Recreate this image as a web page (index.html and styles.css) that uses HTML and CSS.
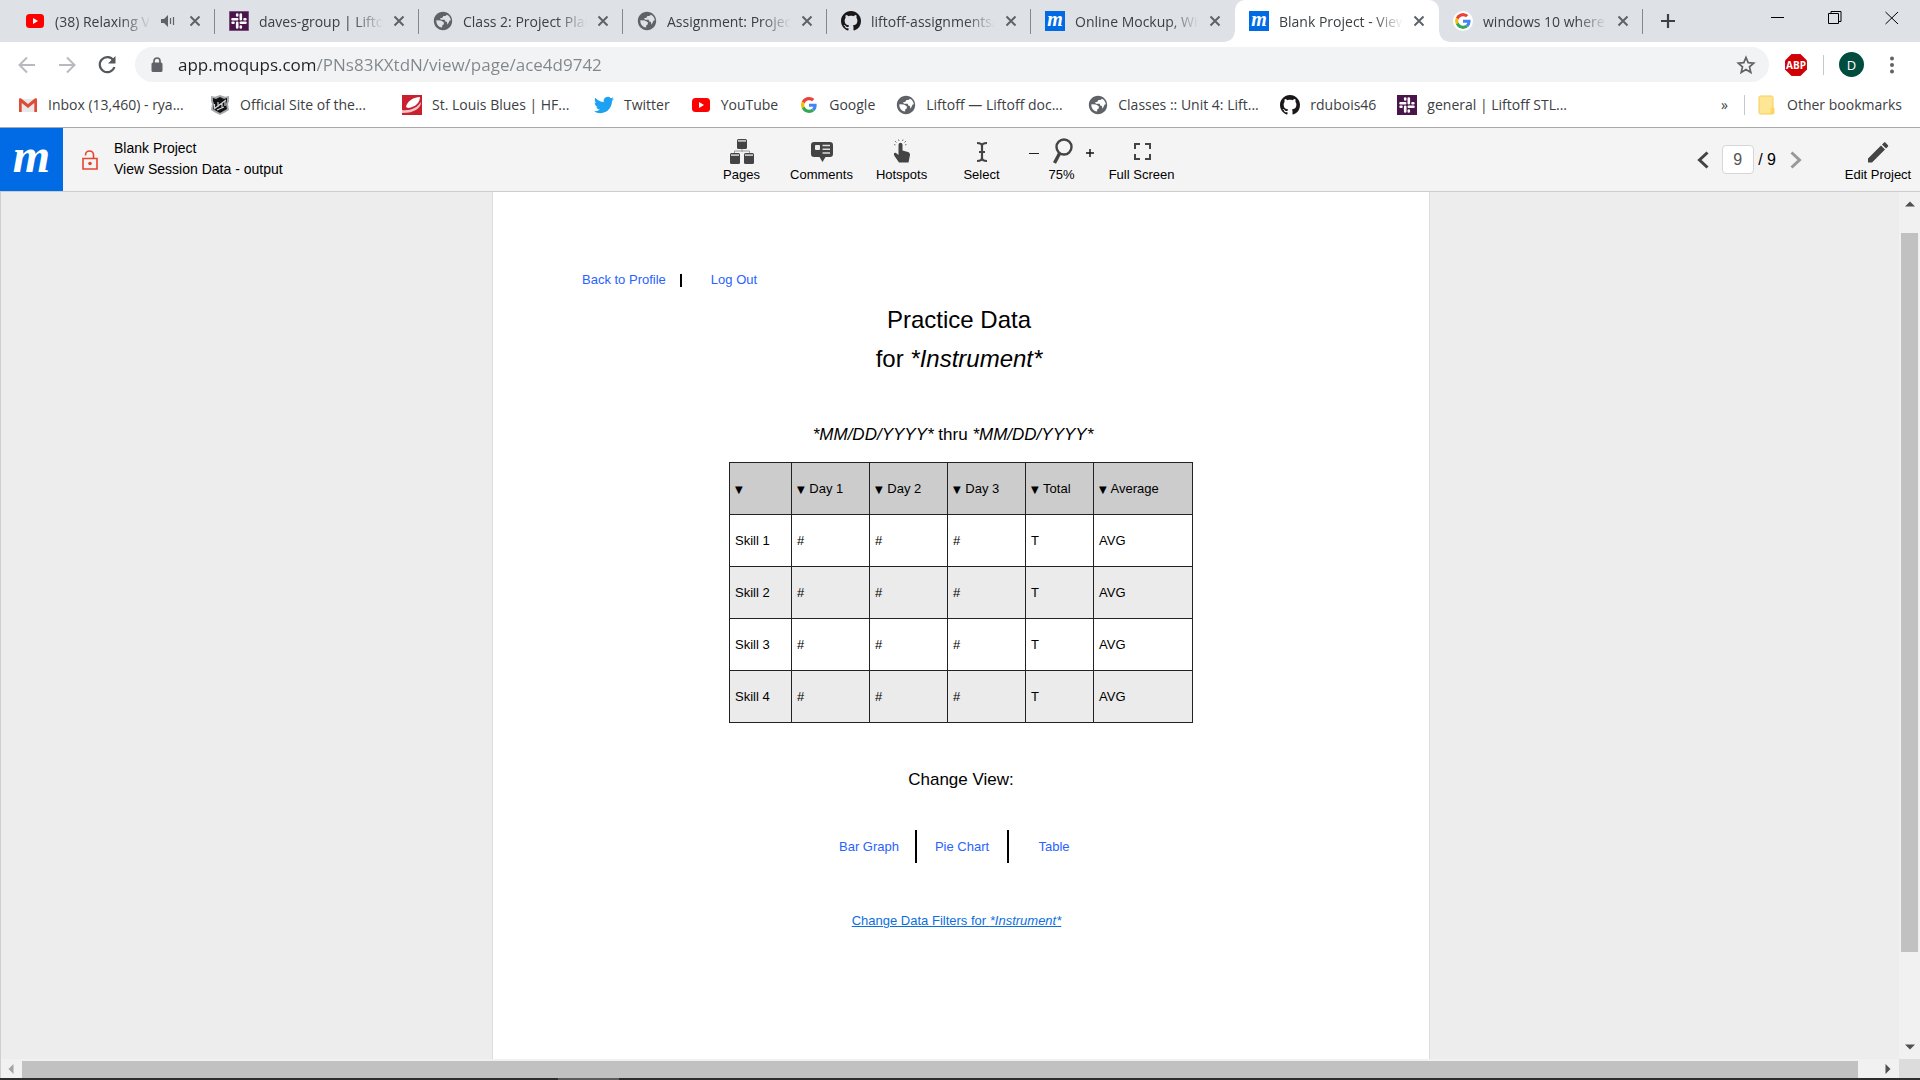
FILE: index.html
```
<!DOCTYPE html>
<html lang="en">
<head>
<meta charset="utf-8">
<meta name="viewport" content="width=device-width, initial-scale=1">
<title>Blank Project - View Session Data</title>
<link rel="stylesheet" href="styles.css">
</head>
<body>
<svg class="sprite" aria-hidden="true">
  <symbol id="youtube" viewBox="0 0 20 20"><rect x="1" y="3" width="18" height="14" rx="3.5" fill="#f00"/><path d="M8 7v6l5-3z" fill="#fff"/></symbol>
  <symbol id="slack" viewBox="0 0 20 20"><rect width="20" height="20" fill="#4a154b"/><g class="marks" stroke-width="2.6" stroke-linecap="round"><path d="M3.500 8.200h4.700M11.800 3.500v4.700M11.800 11.800h4.700M8.200 11.800v4.700M8.200 3.600v.9M16.400 8.200h-.9M11.800 16.400v-.9M3.600 11.800h.9"/></g></symbol>
  <symbol id="globe" viewBox="0 0 24 24"><path fill="#5f6368" d="M12 1C5.9 1 1 5.9 1 12s4.900 11 11 11 11-4.900 11-11S18.100 1 12 1zm-1 18.930c-3.950-.49-7-3.850-7-7.930 0-.35.03-.7.080-1.050L9.500 11.500l3.500 2v2.500l-2 1.500zm6.500-3.500l-1-3.430h-1.500l-1-2.500h-4.500l-1-2h2.500l1.500-2.500h2.500l1.500-1.500c2.600 1 4.500 3.600 5 6.500l-1.500.5z"/></symbol>
  <symbol id="github" viewBox="0 0 16 16"><path fill="#191717" d="M8 0C3.580 0 0 3.580 0 8c0 3.540 2.290 6.530 5.470 7.590.4.070.55-.17.55-.38 0-.19-.01-.82-.01-1.490-2.010.37-2.530-.49-2.690-.94-.09-.23-.48-.94-.82-1.130-.28-.15-.68-.52-.01-.53.63-.01 1.080.58 1.230.82.72 1.210 1.870.87 2.330.66.070-.52.28-.87.51-1.070-1.780-.2-3.640-.89-3.640-3.950 0-.87.31-1.590.82-2.150-.08-.2-.36-1.020.08-2.120 0 0 .67-.21 2.200.82.64-.18 1.320-.27 2-.27.68 0 1.360.09 2 .27 1.530-1.040 2.200-.82 2.200-.82.44 1.100.16 1.920.08 2.120.51.56.82 1.270.82 2.150 0 3.070-1.870 3.750-3.650 3.950.29.25.54.73.54 1.480 0 1.070-.01 1.930-.01 2.200 0 .21.15.46.55.38A8.013 8.013 0 0 0 16 8c0-4.420-3.580-8-8-8z"/></symbol>
  <symbol id="google" viewBox="0 0 48 48"><path fill="#EA4335" d="M24 9.500c3.540 0 6.710 1.220 9.210 3.600l6.850-6.850C35.900 2.380 30.470 0 24 0 14.620 0 6.510 5.380 2.560 13.220l7.980 6.190C12.430 13.720 17.740 9.500 24 9.500z"/><path fill="#4285F4" d="M46.980 24.550c0-1.570-.15-3.090-.38-4.550H24v9.020h12.940c-.58 2.960-2.260 5.480-4.780 7.180l7.730 6c4.510-4.180 7.090-10.360 7.090-17.650z"/><path fill="#FBBC05" d="M10.530 28.590c-.48-1.450-.76-2.990-.76-4.590s.27-3.140.76-4.590l-7.980-6.190C.92 16.460 0 20.120 0 24c0 3.880.92 7.540 2.560 10.780l7.970-6.190z"/><path fill="#34A853" d="M24 48c6.480 0 11.930-2.130 15.890-5.810l-7.730-6c-2.150 1.450-4.920 2.300-8.160 2.300-6.260 0-11.570-4.220-13.470-9.910l-7.980 6.190C6.510 42.620 14.620 48 24 48z"/></symbol>
  <symbol id="close" viewBox="0 0 12 12"><path d="M1.500 1.500l9 9M10.500 1.500l-9 9" stroke="#5f6368" stroke-width="2" fill="none"/></symbol>
</svg>

<header class="chrome">
  <nav class="tabs" aria-label="Tabs">
    <div class="tab"><svg class="fav"><use href="#youtube"/></svg><span class="tab-name">(38) Relaxing Violin</span><svg class="audio" viewBox="0 0 14 12"><path d="M0 4h3l4-4v12l-4-4H0z" fill="#5f6368"/><path d="M9.500 3v6M12.500 2v8" stroke="#5f6368" stroke-width="1.200"/></svg><button class="x" aria-label="Close tab"><svg><use href="#close"/></svg></button></div>
    <div class="tab"><svg class="fav dim"><use href="#slack"/></svg><span class="tab-name">daves-group | Liftoff</span><button class="x" aria-label="Close tab"><svg><use href="#close"/></svg></button></div>
    <div class="tab"><svg class="fav"><use href="#globe"/></svg><span class="tab-name">Class 2: Project Planning</span><button class="x" aria-label="Close tab"><svg><use href="#close"/></svg></button></div>
    <div class="tab"><svg class="fav"><use href="#globe"/></svg><span class="tab-name">Assignment: Project</span><button class="x" aria-label="Close tab"><svg><use href="#close"/></svg></button></div>
    <div class="tab"><svg class="fav"><use href="#github"/></svg><span class="tab-name">liftoff-assignments/</span><button class="x" aria-label="Close tab"><svg><use href="#close"/></svg></button></div>
    <div class="tab before-active"><span class="fav moqups">m</span><span class="tab-name">Online Mockup, Wireframe</span><button class="x" aria-label="Close tab"><svg><use href="#close"/></svg></button></div>
    <div class="tab active"><span class="fav moqups">m</span><span class="tab-name">Blank Project - View</span><button class="x" aria-label="Close tab"><svg><use href="#close"/></svg></button></div>
    <div class="tab"><svg class="fav disc"><use href="#google"/></svg><span class="tab-name">windows 10 where are</span><button class="x" aria-label="Close tab"><svg><use href="#close"/></svg></button></div>
    <button class="new-tab" aria-label="New tab"><svg viewBox="0 0 16 16"><path d="M8 1v14M1 8h14" stroke="#3c4043" stroke-width="2.200"/></svg></button>
    <div class="window-buttons">
      <button aria-label="Minimize"><svg viewBox="0 0 14 14"><path d="M0 6.500h13" stroke="#000"/></svg></button>
      <button aria-label="Restore"><svg viewBox="0 0 14 14"><path d="M.5 2.500h10v10H.5zM3 2.500V.5h10v10h-2.500" stroke="#000" fill="none"/></svg></button>
      <button aria-label="Close window"><svg viewBox="0 0 14 14"><path d="M.5 1l12.500 12M13 1L.5 13" stroke="#000"/></svg></button>
    </div>
  </nav>

  <div class="toolbar">
    <button class="nav-button" aria-label="Back"><svg viewBox="0 0 20 20"><path d="M18 10H3M10 2.500L2.500 10l7.500 7.500" stroke="#b8babd" stroke-width="2" fill="none"/></svg></button>
    <button class="nav-button" aria-label="Forward"><svg viewBox="0 0 20 20"><path d="M2 10h15M10 2.500l7.500 7.500-7.500 7.500" stroke="#b8babd" stroke-width="2" fill="none"/></svg></button>
    <button class="nav-button" aria-label="Reload"><svg viewBox="0 0 20 20"><path d="M16.500 5.500A7.500 7.500 0 1 0 17.400 12" stroke="#54585c" stroke-width="2.200" fill="none"/><path d="M18.500 1v7.500H11z" fill="#54585c"/></svg></button>
    <label class="omnibox">
      <svg class="padlock" viewBox="0 0 12 16"><rect x=".5" y="5.500" width="11" height="9.500" rx="1.500" fill="#5f6368"/><path d="M3 6V4a3 3 0 0 1 6 0v2" stroke="#5f6368" stroke-width="1.700" fill="none"/></svg>
      <input type="text" aria-label="Address" value="app.moqups.com/PNs83KXtdN/view/page/ace4d9742">
      <svg class="star" viewBox="0 0 20 20"><path d="M10 2.500l2.200 5.200 5.500.5-4.200 3.700 1.300 5.500-4.800-2.900-4.800 2.900 1.300-5.500-4.200-3.700 5.500-.5z" fill="none" stroke="#5f6368" stroke-width="1.700"/></svg>
    </label>
    <button class="extension" aria-label="Adblock Plus"><svg viewBox="0 0 22 22"><path d="M6.500 0h9L22 6.500v9L15.500 22h-9L0 15.500v-9z" fill="#c70d2c"/><path d="M6.800.7h8.400l6.100 6.100v8.400l-6.100 6.100H6.800L.7 15.200V6.800z" fill="#d20000"/><text x="11" y="14.500" class="abp">ABP</text></svg></button>
    <span class="divider"></span>
    <button class="avatar">D</button>
    <button class="menu" aria-label="Menu"><svg viewBox="0 0 4 18"><circle cx="2" cy="2.500" r="2"/><circle cx="2" cy="9" r="2"/><circle cx="2" cy="15.500" r="2"/></svg></button>
  </div>

  <nav class="bookmarks" aria-label="Bookmarks">
    <a class="wide" href="#"><svg viewBox="0 0 20 20"><path d="M2 4h16v13H2z" fill="#e9e9e9"/><path d="M1 4.500C1 3 2.500 3 3.200 3.600L10 9l6.800-5.400C17.500 3 19 3 19 4.500V17h-2.700V8L10 13 3.700 8v9H1z" fill="#dd4b39"/></svg>Inbox (13,460) - rya...</a>
    <a class="wide" href="#"><svg viewBox="0 0 20 20"><path d="M1 1l4 .8L10 0l5 1.800L19 1v5l-1 3 1 6-4 2.500-5 2.500-5-2.500L1 15l1-6-1-3z" fill="#a5a9ab"/><path d="M3 3l3 1 4-2 4 2 3-1v3l-1 3 1 5-3.500 2-3.500 2-3.500-2L3 14l1-5-1-3z" fill="#111"/><path d="M4 14L16 5M4.500 9v4M8 7v5M12 8v5M15 6v5M7 15l7-3" stroke="#d4d6d7" stroke-width="1.200"/></svg>Official Site of the...</a>
    <a class="wide" href="#"><svg viewBox="0 0 20 20"><path d="M0 0h20v20H0z" fill="#c8202f"/><path d="M4 12C5 6 12 2 18 2c0 5-4 10-12 11z" fill="#fff"/><path d="M0 15c8 1 15-2 19-8 0 6-6 11-19 11z" fill="#f3c3c7"/></svg>St. Louis Blues | HF...</a>
    <a href="#"><svg viewBox="0 0 24 24"><path fill="#1da1f2" d="M23.953 4.570a10 10 0 0 1-2.825.775 4.958 4.958 0 0 0 2.163-2.723c-.951.555-2.005.959-3.127 1.184a4.920 4.920 0 0 0-8.384 4.482C7.690 8.095 4.067 6.130 1.640 3.162a4.822 4.822 0 0 0-.666 2.475c0 1.710.87 3.213 2.188 4.096a4.904 4.904 0 0 1-2.228-.616v.06a4.923 4.923 0 0 0 3.946 4.827 4.996 4.996 0 0 1-2.212.085 4.936 4.936 0 0 0 4.604 3.417 9.867 9.867 0 0 1-6.102 2.105c-.39 0-.779-.023-1.170-.067a13.995 13.995 0 0 0 7.557 2.209c9.053 0 13.998-7.496 13.998-13.985 0-.21 0-.42-.015-.63A9.935 9.935 0 0 0 24 4.590z"/></svg>Twitter</a>
    <a href="#"><svg><use href="#youtube"/></svg>YouTube</a>
    <a href="#"><svg class="inset"><use href="#google"/></svg>Google</a>
    <a class="wide" href="#"><svg><use href="#globe"/></svg>Liftoff — Liftoff doc...</a>
    <a class="wide" href="#"><svg><use href="#globe"/></svg>Classes :: Unit 4: Lift...</a>
    <a href="#"><svg><use href="#github"/></svg>rdubois46</a>
    <a class="wide" href="#"><svg><use href="#slack"/></svg>general | Liftoff STL...</a>
    <button class="more">»</button>
    <span class="divider"></span>
    <a class="other" href="#"><svg viewBox="0 0 20 20"><path d="M2 2.500C2 1.500 2.500 1 3.500 1h11c1 0 1.500.5 1.500 1.500V19H3.500C2.500 19 2 18.500 2 17.500z" fill="#ffe694" stroke="#f4cf57"/><path d="M13.500 19v-5.500c0-1.500 4-1.500 4 0v4c0 1-.5 1.500-1.500 1.500z" fill="#fbd75f"/></svg>Other bookmarks</a>
  </nav>
</header>

<header class="app-bar">
  <div class="project">
    <a class="logo moqups" href="#">m</a>
    <svg class="unlocked" viewBox="0 0 16 20"><path d="M1 8.500h14V19H1zM3.500 5.500V5A4 4 0 0 1 11.500 5v3.500" fill="none" stroke="#e8442e" stroke-width="1.600"/><circle cx="8" cy="13.500" r="1.800" fill="#e8442e"/></svg>
    <div class="names"><div>Blank Project</div><div>View Session Data - output</div></div>
  </div>
  <div class="tools">
    <button class="tool"><svg viewBox="0 0 24 26"><path d="M12 11v3M4.500 15.500V13h15v2.500" stroke="#999" fill="none"/><g fill="#444"><rect x="7" y="1" width="10" height="10" rx="1.500"/><rect y="15" width="10" height="11" rx="1.500"/><rect x="14" y="15" width="10" height="11" rx="1.500"/></g><path d="M8 2.800h8M1 17.200h8M15 17.200h8" stroke="#c4c4c4" stroke-width="1.800"/></svg>Pages</button>
    <button class="tool"><svg viewBox="0 0 24 26"><path d="M4 4h16a3 3 0 0 1 3 3v9a3 3 0 0 1-3 3h-4.500L12.500 24l-3-5H4a3 3 0 0 1-3-3V7a3 3 0 0 1 3-3z" fill="#444"/><rect x="5" y="7" width="5" height="5" rx="1" fill="#eee"/><path d="M12.500 7.500H20M12.500 11.300H20M12.500 15H20" stroke="#ddd" stroke-width="1.600"/></svg>Comments</button>
    <button class="tool"><svg viewBox="0 0 24 26"><path d="M8.500 7c0-3 4-3 4 0v5.500l5.500 1.500c1.600.5 2 1.500 2 3l-1.500 7.500H9L4.500 18c-1.500-2.500 0-4 1.500-3l2.500 2z" fill="#444"/><path d="M5.500 7L4 6.500M6.500 4.500L5 3M9 3L8.500 1.500M12.500 3l.5-1.500M14.500 4.500L16 3M15 7l1.500-.5" stroke="#777"/></svg>Hotspots</button>
    <button class="tool"><svg viewBox="0 0 24 26"><path d="M7 5c3 0 5 .5 5 3 0-2.500 2-3 5-3M12 7v14M7 23c3 0 5-.5 5-3 0 2.500 2 3 5 3M9 14h6" stroke="#444" stroke-width="2.200" fill="none"/></svg>Select</button>
    <div class="zoom">
      <button aria-label="Zoom out"><svg viewBox="0 0 10 10"><path d="M0 5.500h10" stroke="#222"/></svg></button>
      <button class="zoom-level"><svg viewBox="0 0 24 26"><circle cx="14" cy="9" r="7.500" fill="none" stroke="#444" stroke-width="2.400"/><path d="M9.500 15.500L4.500 25" stroke="#444" stroke-width="3.400"/></svg>75%</button>
      <button aria-label="Zoom in"><svg viewBox="0 0 10 10"><path d="M1 5h8M5 1v8" stroke="#111" stroke-width="1.400"/></svg></button>
    </div>
    <button class="tool"><svg viewBox="0 0 24 26"><path d="M5 11V6h5M15 6h5v5M20 16v5h-5M10 21H5v-5" fill="none" stroke="#444" stroke-width="2"/></svg>Full Screen</button>
  </div>
  <div class="paging">
    <button aria-label="Previous page"><svg viewBox="0 0 12 18"><path d="M10.500 1.500L2.500 9l8 7.500" fill="none" stroke="#444" stroke-width="3"/></svg></button>
    <label class="page-field"><input type="text" value="9" aria-label="Page"> / 9</label>
    <button aria-label="Next page"><svg viewBox="0 0 12 18"><path d="M1.500 1.500l8 7.500-8 7.500" fill="none" stroke="#999" stroke-width="3"/></svg></button>
    <button class="tool edit"><svg viewBox="0 0 24 26"><path d="M2 20.500L15 7.500l4 4L6 24.500H2zM16 6.500l1.800-1.800c.6-.6 1.200-.6 1.800 0l2.200 2.200c.6.6.6 1.200 0 1.800L20 10.500z" fill="#444"/></svg>Edit Project</button>
  </div>
</header>

<main class="workspace">
  <div class="canvas">
    <article class="paper">
      <nav class="account"><a href="#">Back to Profile</a><span class="bar"></span><a href="#">Log Out</a></nav>
      <h1>Practice Data<br>for <i>*Instrument*</i></h1>
      <p class="range"><i>*MM/DD/YYYY*</i> thru <i>*MM/DD/YYYY*</i></p>
      <table>
        <colgroup><col class="c-skill"><col class="c-day"><col class="c-day"><col class="c-day"><col class="c-total"><col class="c-average"></colgroup>
        <thead><tr><th><button aria-label="Sort by skill"><span>▼</span></button></th><th><button><span>▼</span> Day 1</button></th><th><button><span>▼</span> Day 2</button></th><th><button><span>▼</span> Day 3</button></th><th><button><span>▼</span> Total</button></th><th><button><span>▼</span> Average</button></th></tr></thead>
        <tbody>
          <tr><td>Skill 1</td><td>#</td><td>#</td><td>#</td><td>T</td><td>AVG</td></tr>
          <tr><td>Skill 2</td><td>#</td><td>#</td><td>#</td><td>T</td><td>AVG</td></tr>
          <tr><td>Skill 3</td><td>#</td><td>#</td><td>#</td><td>T</td><td>AVG</td></tr>
          <tr><td>Skill 4</td><td>#</td><td>#</td><td>#</td><td>T</td><td>AVG</td></tr>
        </tbody>
      </table>
      <h2>Change View:</h2>
      <nav class="views"><a href="#">Bar Graph</a><a href="#">Pie Chart</a><a href="#">Table</a></nav>
      <p class="filters"><a href="#">Change Data Filters for <i>*Instrument*</i></a></p>
    </article>
  </div>
  <div class="scroll vertical"><svg viewBox="0 0 10 6"><path d="M0 5.500L5 .5l5 5z" fill="#505050"/></svg><div class="track"><div class="thumb"></div></div><svg viewBox="0 0 10 6"><path d="M0 .5l5 5 5-5z" fill="#505050"/></svg></div>
  <div class="scroll horizontal"><svg viewBox="0 0 6 10"><path d="M5.500 0L.5 5l5 5z" fill="#a3a3a3"/></svg><div class="track"><div class="thumb"></div></div><svg viewBox="0 0 6 10"><path d="M.5 0l5 5-5 5z" fill="#505050"/></svg></div>
  <div class="corner"></div>
</main>
<footer class="taskbar"><span></span></footer>
</body>
</html>
```
FILE: styles.css
```
* { box-sizing: border-box; }
body {
  margin: 0;
  min-height: 100vh;
  display: flex;
  flex-direction: column;
  font-family: "Liberation Sans", Arial, sans-serif;
  background: #ededed;
  color: #000;
}
button {
  font: inherit;
  color: inherit;
  padding: 0;
  border: 0;
  background: none;
}
a { color: inherit; text-decoration: none; }
svg { display: block; flex: none; }
.sprite { position: absolute; width: 0; height: 0; }
.moqups {
  display: flex;
  align-items: center;
  justify-content: center;
  background: #006be5;
  color: #fff;
  font-family: "Liberation Serif", serif;
  font-weight: bold;
  font-style: italic;
}

/* Browser chrome */
.chrome {
  font-family: "Open Sans", "Noto Sans", sans-serif;
  font-size: 14px;
  color: #3c4043;
  background: #fff;
  border-bottom: 1px solid #a9a9a9;
}
.tabs {
  display: flex;
  height: 42px;
  padding-left: 11px;
  background: #dee1e6;
}
.tab {
  position: relative;
  display: flex;
  align-items: center;
  flex: 0 1 204px;
  min-width: 0;
  padding: 0 14px;
}
.tab::after {
  content: "";
  position: absolute;
  right: 0;
  top: 9px;
  width: 1px;
  height: 25px;
  background: #85888c;
}
.before-active::after { display: none; }
.tab.active {
  background: #fff;
  border-radius: 10px 10px 0 0;
}
.tab.active::before,
.tab.active::after {
  content: "";
  position: absolute;
  top: auto;
  bottom: 0;
  width: 10px;
  height: 10px;
}
.tab.active::before { left: -10px; background: radial-gradient(circle at 0 0, #dee1e6 9px, #fff 10px); }
.tab.active::after { right: -10px; background: radial-gradient(circle at 100% 0, #dee1e6 9px, #fff 10px); }
.fav { width: 20px; height: 20px; flex: none; }
.fav.moqups { font-size: 20px; line-height: 16px; padding-bottom: 4px; }
.fav.disc { padding: 2px; background: #fff; border-radius: 50%; }
.marks { stroke: #fff; }
.dim .marks,
.dim { stroke: #a88aa9; }
.tab-name {
  flex: 1;
  min-width: 0;
  margin: 0 10px;
  overflow: hidden;
  white-space: nowrap;
  mask-image: linear-gradient(to left, transparent, #000 30px);
}
.audio { width: 14px; height: 12px; margin-right: 14px; }
.x svg { width: 12px; height: 12px; }
.new-tab { padding: 0 17px; }
.new-tab svg { width: 16px; height: 16px; }
.window-buttons { display: flex; margin-left: auto; height: 36px; }
.window-buttons button { width: 57px; display: flex; align-items: center; justify-content: center; }
.window-buttons svg { width: 14px; height: 14px; }

.toolbar {
  display: flex;
  align-items: center;
  height: 45px;
  padding: 0 26px 0 7px;
}
.nav-button { width: 40px; display: flex; justify-content: center; }
.nav-button svg { width: 20px; height: 20px; }
.omnibox {
  flex: 1;
  display: flex;
  align-items: center;
  height: 35px;
  margin-left: 8px;
  padding: 0 13px 0 16px;
  border-radius: 18px;
  background: #f1f3f4;
}
.padlock { width: 12px; height: 16px; }
.omnibox input {
  flex: 1;
  min-width: 0;
  margin: 0 15px;
  padding: 0;
  border: 0;
  outline: 0;
  font: 17px/24px "Open Sans", "Noto Sans", sans-serif;
  color: transparent;
  background: linear-gradient(90deg, #202124 137px, #80868b 137px) text;
}
.star { width: 20px; height: 20px; }
.extension { margin-left: 16px; }
.extension svg { width: 22px; height: 22px; }
.abp { font: bold 10px "Open Sans", sans-serif; fill: #fff; text-anchor: middle; }
.divider { width: 1px; height: 20px; background: #c4c7cb; }
.toolbar .divider { margin: 0 15px 0 16px; }
.avatar {
  width: 25px;
  height: 25px;
  border-radius: 50%;
  background: #004d40;
  color: #fff;
  font-size: 13px;
}
.menu { margin-left: 26px; }
.menu svg { width: 4px; height: 18px; fill: #5f6368; }

.bookmarks {
  display: flex;
  align-items: center;
  height: 40px;
  padding: 0 18px 5px;
  white-space: nowrap;
}
.bookmarks a { display: flex; align-items: center; gap: 10px; margin-right: 21px; }
.bookmarks a svg { width: 20px; height: 20px; }
.bookmarks a svg.inset { padding: 2px; }
.bookmarks a.wide { width: 192px; margin-right: 0; }
.bookmarks .more { margin: 0 16px 0 auto; }
.bookmarks a.other { margin: 0 0 0 12px; }

/* Application bar */
.app-bar {
  display: grid;
  grid-template-columns: 19fr auto 20fr;
  height: 64px;
  background: #f4f4f4;
  border-bottom: 1px solid #cdcdcd;
  font-size: 13px;
}
.project { display: flex; align-items: center; font-size: 14px; line-height: 21px; }
.names { padding-bottom: 2px; }
.logo { width: 63px; height: 63px; font-size: 48px; line-height: 48px; padding-bottom: 8px; }
.unlocked { width: 16px; height: 20px; margin: 0 16px 0 19px; }
.tools { display: flex; }
.tool,
.zoom-level {
  display: flex;
  flex-direction: column;
  align-items: center;
  padding-top: 10px;
  line-height: 16px;
  white-space: nowrap;
}
.tool { width: 80px; }
.tool svg,
.zoom-level svg { width: 24px; height: 26px; margin-bottom: 3px; }
.zoom { display: flex; width: 80px; justify-content: center; gap: 10px; }
.zoom button:not(.zoom-level) { padding-bottom: 14px; }
.zoom button:not(.zoom-level) svg { width: 10px; height: 10px; }
.paging { display: flex; align-items: center; justify-content: flex-end; padding-right: 2px; font-size: 16px; }
.paging > button > svg { width: 12px; height: 18px; }
.page-field { margin: 0 14px 0 13px; white-space: nowrap; }
.page-field input {
  width: 32px;
  height: 29px;
  border: 1px solid #d6d6d6;
  border-radius: 4px;
  background: #fff;
  color: #555;
  font: inherit;
  text-align: center;
}
.paging .edit { align-self: stretch; margin-left: 36px; font-size: 13px; }
.paging .edit > svg { width: 24px; height: 26px; }

/* Workspace */
.workspace {
  flex: 1;
  display: grid;
  grid-template-columns: 1fr 21px;
  grid-template-rows: 1fr 19px;
  border-left: 1px solid #cfcfcf;
}
.canvas { display: flex; justify-content: center; padding-left: 22px; }
.paper {
  width: 938px;
  padding: 78px 0 40px;
  background: #fff;
  border: solid #ddd;
  border-width: 0 1px;
  font-size: 13px;
  line-height: 20px;
  text-align: center;
}
.account { display: flex; align-items: center; padding-left: 89px; color: #2962ff; }
.bar { width: 2px; height: 13px; margin: 0 29px 0 14px; background: #000; }
h1, h2, p { margin: 0; font-weight: normal; }
h1 { margin-top: 10px; padding-right: 4px; font-size: 24px; line-height: 39px; }
.range { margin-top: 47px; padding-right: 16px; font-size: 17px; }
table {
  margin: 17px auto 0;
  border-collapse: collapse;
  table-layout: fixed;
  width: 464px;
  text-align: left;
}
.c-skill { width: 62px; }
.c-day { width: 78px; }
.c-total { width: 68px; }
.c-average { width: 99px; }
th, td { height: 52px; padding: 0 5px; border: 1px solid #222; font-weight: normal; }
th { background: #ccc; }
th button { line-height: 20px; }
th span { margin-right: 1px; font: 10px "DejaVu Sans", sans-serif; }
tbody tr:nth-child(even) { background: #ebebeb; }
h2 { margin-top: 47px; font-size: 17px; }
.views { display: flex; justify-content: center; margin-top: 40px; color: #2962ff; }
.views a { width: 92px; line-height: 33px; }
.views a + a { border-left: 2px solid #000; }
.filters { margin-top: 48px; padding-right: 9px; }
.filters a { color: #0b6fe0; text-decoration: underline; }

.scroll { display: flex; align-items: center; background: #f1f1f1; }
.track { flex: 1; display: flex; }
.thumb { background: #c1c1c1; }
.vertical { flex-direction: column; padding: 9px 0; }
.vertical svg { width: 10px; height: 6px; }
.vertical .track { flex-direction: column; padding: 26px 0 92px; }
.vertical .thumb { flex: 1; width: 17px; }
.horizontal { padding: 0 8px 0 7px; }
.horizontal svg { width: 6px; height: 10px; }
.horizontal .track { padding: 2px 27px 0 8px; }
.horizontal .thumb { flex: 1; height: 17px; }
.corner { background: #dcdcdc; }
.taskbar { height: 2px; padding-left: 558px; background: #2d2d2d; }
.taskbar span { display: block; width: 61px; height: 2px; background: #5c5c5c; }
```
